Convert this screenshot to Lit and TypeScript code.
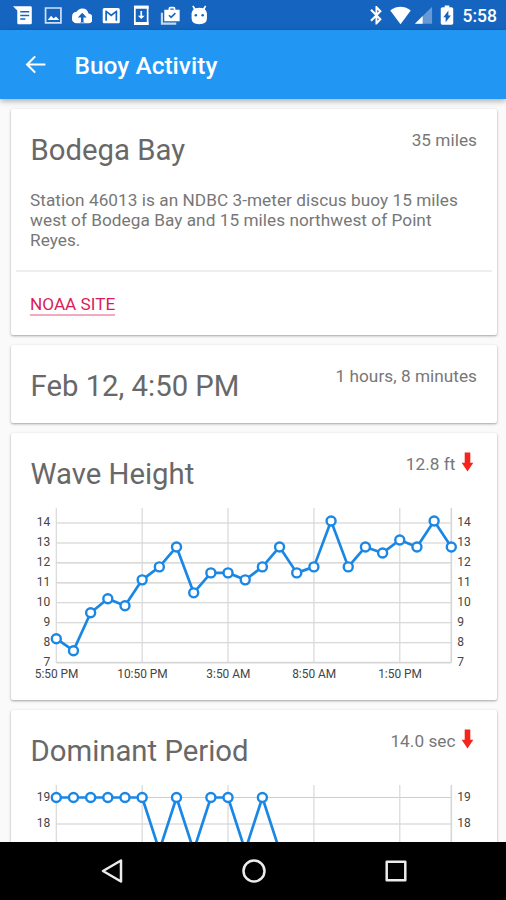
import { LitElement, html, svg, css } from "lit";
import { customElement, property } from "lit/decorators.js";

const WAVE = [8.2, 7.6, 9.5, 10.2, 9.85, 11.15, 11.8, 12.8, 10.5, 11.5, 11.5, 11.15, 11.8, 12.8, 11.5, 11.8, 14.1, 11.8, 12.8, 12.5, 13.15, 12.8, 14.1, 12.8];
const PERIOD = [19, 19, 19, 19, 19, 19, 17, 19, 17, 19, 19, 17, 19, 17, 16, 16, 15, 16, 15, 15, 14, 15, 14, 14];
const TIMES = ["5:50 PM", "10:50 PM", "3:50 AM", "8:50 AM", "1:50 PM"];

@customElement("line-chart")
class LineChart extends LitElement {
  @property({ attribute: false }) values: number[] = [];
  @property({ type: Number }) min = 0;
  @property({ type: Number }) max = 10;
  @property({ type: Number }) unit = 20;
  @property({ type: Number }) head = 15;
  @property({ attribute: false }) times: string[] = TIMES;

  static styles = css`
    :host { display: block; }
    .chart { display: block; overflow: visible; }
    .grid { stroke: #cecece; stroke-width: 1.1; }
    .col { stroke: #d8d8d8; stroke-width: 1.2; }
    .edge { stroke: #d6d6d6; stroke-width: 1.6; }
    .line { fill: none; stroke: #1b87e5; stroke-width: 2.7; stroke-linejoin: round; }
    .dot { fill: #fff; stroke: #1b87e5; stroke-width: 2.4; }
    .label { font: 12px Roboto, sans-serif; fill: #444; }
    .end { text-anchor: end; }
    .mid { text-anchor: middle; font-size: 11.9px; }
  `;

  render() {
    const left = 45.3, right = 440.3;
    const step = (right - left) / (this.values.length - 1);
    const y = (v: number) => this.head + (this.max - v) * this.unit;
    const x = (i: number) => left + i * step;
    const hasTimes = this.times.length > 0;
    const bottom = hasTimes ? y(this.min) : y(this.min) + this.unit;
    const ticks = Array.from({ length: this.max - this.min + 1 }, (_, i) => this.max - i);
    return html`<svg class="chart" width="486" height=${bottom + 20}>
      ${ticks.map((t) => svg`
        <line class=${hasTimes && t === this.min ? "edge" : "grid"} x1=${left} x2=${right} y1=${y(t)} y2=${y(t)}></line>
        <text class="label end" x="39.3" y=${y(t) + 3.4}>${t}</text>
        <text class="label" x="446.3" y=${y(t) + 3.4}>${t}</text>`)}
      ${[0, 5, 10, 15, 20].map((i) => svg`<line class="col" x1=${x(i)} x2=${x(i)} y1="0" y2=${bottom}></line>`)}
      ${this.times.map((t, i) => svg`<text class="label mid" x=${x(i * 5) + 0.3} y=${bottom + 15.3}>${t}</text>`)}
      <line class="edge" x1=${right} x2=${right} y1="0" y2=${bottom}></line>
      <polyline class="line" points=${this.values.map((v, i) => `${x(i)},${y(v)}`).join(" ")}></polyline>
      ${this.values.map((v, i) => svg`<circle class="dot" cx=${x(i)} cy=${y(v)} r="4.5"></circle>`)}
    </svg>`;
  }
}

const icon = (body: unknown, cls = "") => html`<svg class="ic ${cls}" viewBox="0 0 24 24">${body}</svg>`;

const STATUS = [
  svg`<path d="M0 1.500H20.500Q22 1.500 22 3V21Q22 22.500 20.500 22.500H6.500Q5 22.500 5 21V6.500Z"></path><path class="cut" d="M8.500 8h10.500M8.500 12.300h10.500M8.500 16.300h6"></path>`,
  svg`<path class="stroke soft" d="M3 3.500h18v17.500H3z"></path><path d="M5.500 17.500l4-5 3 3.200 2.700-2.200 3.800 4z"></path>`,
  svg`<path d="M19.350 10.040A7.490 7.490 0 0 0 12 4C9.110 4 6.600 5.640 5.350 8.040A5.990 5.990 0 0 0 0 14c0 3.310 2.690 6 6 6h4.500v-5.500H6.800L12 9l5.200 5.500H13.500V20H19c2.760 0 5-2.240 5-5 0-2.640-2.050-4.780-4.650-4.960z"></path><path d="M0 14a6 6 0 0 0 6 7.500h13a5 5 0 0 0 5-6.500l-5 4.500h-4.500v1h-5v-1H6z"></path>`,
  svg`<path d="M20 3.500H4c-1.100 0-2 .9-2 2v14c0 1.100.9 2 2 2h16c1.100 0 2-.9 2-2v-14c0-1.100-.9-2-2-2zm-1 15h-2V9.500L12 13.500 7 9.500v9H5V6.500h1.200l5.800 4.250L17.800 6.500H19v12z"></path>`,
  svg`<path class="stroke" d="M4.500 2h15v20.500h-15z"></path><path d="M3.500 1h17v3.500h-17zM3.500 20h17v3.500h-17zM11 7h2v5.500h3l-4 4-4-4h3z"></path>`,
  svg`<path class="faint" d="M1 9h2.500v11.500H19V23H1z"></path><path d="M5 5.500h5V4q0-2 2-2h4q2 0 2 2v1.500h5V19H5zM12 4v1.500h4V4z"></path><path class="cut" d="M10.500 12l2.500 2.500 5-5"></path>`,
  svg`<path d="M3 9h18v6.500q0 7-9 7t-9-7zM3 10Q3.500 6.800 5.500 5L3.800 1.500 5.200.7 7.500 3.800q4.500-1.400 9 0L18.800.7l1.400.8L18.500 5Q20.500 6.800 21 10z"></path><circle class="hole" cx="8" cy="12" r="1.500"></circle><circle class="hole" cx="16" cy="12" r="1.500"></circle>`,
];

const arrow = html`<svg class="arrow" width="13" height="20" viewBox="0 0 13 20"><path d="M3.700.5h5.600v10.300h3L6.500 19.600.7 10.800h3z"></path></svg>`;

@customElement("app-root")
class AppRoot extends LitElement {
  static styles = css`
    :host { display: flex; flex-direction: column; height: 900px; overflow: hidden; background: #fafafa; font-family: Roboto, sans-serif; color: #686868; }
    .status { height: 30px; flex: none; background: #1565c0; display: flex; align-items: center; justify-content: space-between; color: #fff; box-sizing: border-box; padding: 0 9px 0 8.700px; }
    .group { display: flex; align-items: center; }
    .slot { width: 29.400px; display: flex; justify-content: center; }
    .ic { width: 20.500px; height: 20.500px; fill: #fff; display: block; flex: none; }
    .cut { fill: none; stroke: #1565c0; stroke-width: 1.800; }
    .stroke { fill: none; stroke: #fff; stroke-width: 2; }
    .soft { opacity: .8; }
    .hole { fill: #1565c0; }
    .faint { fill: #fff; opacity: .75; }
    .dim { fill: #fff; opacity: .35; }
    .clock { font-size: 17.500px; font-weight: 500; margin-left: 5px; line-height: 30px; position: relative; top: 1px; }
    .bt { width: 21px; margin-right: 2px; }
    .wifi { width: 23px; }
    .sig { width: 21px; margin-left: 1px; margin-right: 2px; }
    .batt { width: 22px; height: 22px; }
    .bar { height: 69px; flex: none; background: #2196f3; display: flex; align-items: center; z-index: 1; box-shadow: 0 2px 6px rgba(0,0,0,.32); color: #fff; }
    .back { margin-left: 22.500px; width: 25px; height: 25px; margin-top: -1px; }
    .heading { margin: 2.500px 0 0 27px; font-size: 24.500px; font-weight: 500; line-height: 30px; }
    .content { flex: 1; min-height: 0; overflow: hidden; padding: 10px 9.500px 0 11px; display: flex; flex-direction: column; gap: 10px; }
    .card { background: #fff; flex: none; border-radius: 2px; box-shadow: 0 1px 2.500px rgba(0,0,0,.36); box-sizing: border-box; }
    .info { height: 225.500px; }
    .date { height: 78px; }
    .wave { height: 267px; }
    .period { height: 300px; }
    .top { display: flex; justify-content: space-between; padding: 0 19.500px 0 19.500px; height: 75.500px; align-items: flex-start; }
    .title { font-size: 29.300px; line-height: 36px; margin-top: 23px; white-space: nowrap; }
    .side { font-size: 17.200px; line-height: 22px; margin-top: 20px; color: #777; display: flex; white-space: nowrap; letter-spacing: .04px; }
    .arrow { margin: -.500px 3px 0 5.500px; fill: #f5251b; }
    .desc { margin: 5.500px 25px 0 19px; font-size: 17.200px; line-height: 20px; color: #777; letter-spacing: .05px; }
    .rule { height: 2.500px; background: #eee; margin: 19.500px 5px 0; }
    .link { display: inline-block; margin: 21.500px 0 0 19px; font-size: 17.200px; line-height: 20px; color: #dc1c58; text-decoration: none; border-bottom: 2px solid #f3a9c0; }
    .nav { height: 58.500px; box-sizing: border-box; padding-left: 2px; flex: none; background: #000; display: flex; justify-content: center; align-items: center; gap: 118px; z-index: 1; }
    .key { width: 24px; height: 24px; fill: none; stroke: #ececec; stroke-width: 2.500; }
  `;

  render() {
    return html`
      <div class="status">
        <div class="group">${STATUS.map((s) => html`<div class="slot">${icon(s)}</div>`)}</div>
        <div class="group">
          ${icon(svg`<path d="M18.200 7.200L12.300 1.200H10.800v8L6.410 4.800 4.700 6.400 10.290 12 4.700 17.600l1.710 1.600L10.800 14.800v8h1.500l5.900-6L13.500 12zM13 5.600l1.880 1.700L13 9.200zM14.880 16.700L13 18.400v-3.600z"></path>`, "bt")}
          ${icon(svg`<path d="M12.010 22.500L24 6.500C23.190 5.660 18.710 2 12 2S.81 5.660 0 6.500z"></path>`, "wifi")}
          ${icon(svg`<path class="dim" d="M2 22h20V2z"></path><path d="M2 22h9v-9z"></path>`, "sig")}
          ${icon(svg`<path d="M16.500 3.500H14.500V1.500h-5v2H7.500C6 3.500 5.200 4.300 5.200 5.500V21c0 1 .8 1.500 1.600 1.500h10.400c.8 0 1.600-.5 1.600-1.500V5.500c0-1.200-.8-2-2.300-2z"></path><path class="hole" d="M10.500 20v-5.500H8L13.500 7v5.500H16.300z"></path>`, "batt")}
          <span class="clock">5:58</span>
        </div>
      </div>
      <div class="bar">
        ${icon(svg`<path d="M21.500 11H6.330l6.090-6.090L11 3.500 2.500 12l8.500 8.500 1.410-1.410L6.330 13H21.500z"></path>`, "back")}
        <div class="heading">Buoy Activity</div>
      </div>
      <div class="content">
        <div class="card info">
          <div class="top"><div class="title">Bodega Bay</div><div class="side">35 miles</div></div>
          <div class="desc">Station 46013 is an NDBC 3-meter discus buoy 15 miles<br>west of Bodega Bay and 15 miles northwest of Point<br>Reyes.</div>
          <div class="rule"></div>
          <a class="link">NOAA SITE</a>
        </div>
        <div class="card date">
          <div class="top"><div class="title">Feb 12, 4:50 PM</div><div class="side">1 hours, 8 minutes</div></div>
        </div>
        <div class="card wave">
          <div class="top"><div class="title">Wave Height</div><div class="side">12.8 ft${arrow}</div></div>
          <line-chart .values=${WAVE} min="7" max="14" unit="19.95" head="15"></line-chart>
        </div>
        <div class="card period">
          <div class="top"><div class="title">Dominant Period</div><div class="side">14.0 sec${arrow}</div></div>
          <line-chart .values=${PERIOD} .times=${[]} min="18" max="19" unit="26.5" head="12.5"></line-chart>
        </div>
      </div>
      <div class="nav">
        <svg class="key" viewBox="0 0 24 24"><path d="M21 1.500v21L3 12z" stroke-linejoin="round"></path></svg>
        <svg class="key" viewBox="0 0 24 24"><circle cx="12" cy="12" r="10.500"></circle></svg>
        <svg class="key" viewBox="0 0 24 24"><path d="M2.700 2.700h18.600v18.600H2.700z" stroke-linejoin="round"></path></svg>
      </div>`;
  }
}
